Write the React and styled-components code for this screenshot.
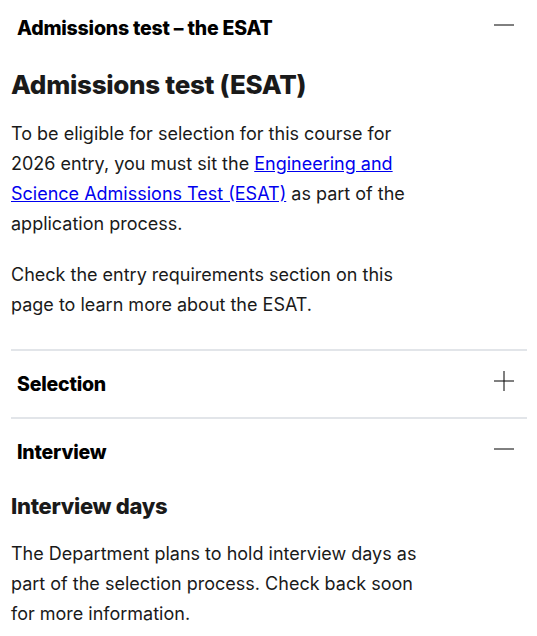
import React from 'react';
import styled, { createGlobalStyle } from 'styled-components';

const Global = createGlobalStyle`
  body {
    margin: 0;
    background: #fff;
    font-family: "Inter", "Liberation Sans", sans-serif;
    color: #1a1a1a;
  }
`;

const Page = styled.div`
  padding: 0 10px 0 11px;
`;

const Item = styled.section`
  border-top: ${p => (p.$first ? 'none' : '2px solid #e2e5e9')};
`;

const Header = styled.div`
  display: flex;
  align-items: center;
  justify-content: space-between;
  height: ${p => (p.$first ? '56px' : '66px')};
  padding-left: 6px;
`;

const Title = styled.h3`
  margin: 0;
  font-size: 19.5px;
  font-weight: 800;
  color: #000;
  letter-spacing: -0.2px;
`;

const Toggle = styled.span`
  width: 20px;
  height: 20px;
  margin: 0 13px 6px 0;
  display: flex;
`;

const Body = styled.div`
  padding: ${p => p.$top || 0}px 0 8px;
`;

const Heading = styled.h2`
  margin: 0 0 ${p => (p.$small ? 19 : 17)}px;
  font-size: ${p => (p.$small ? 22 : 26)}px;
  line-height: 1.3;
  font-weight: 800;
  color: #1a1a1a;
  letter-spacing: -0.3px;
`;

const Para = styled.p`
  margin: 0 0 21px;
  max-width: 410px;
  font-size: 18px;
  line-height: 30px;
`;

const Link = styled.a`
  color: #0000ee;
  text-decoration: underline;
`;

const Icon = ({ open }) => (
  <svg width="20" height="20" viewBox="0 0 20 20">
    <line x1="0" y1="10" x2="20" y2="10" stroke="#000" strokeWidth="1" />
    {!open && <line x1="10" y1="0" x2="10" y2="20" stroke="#000" strokeWidth="1" />}
  </svg>
);

const Accordion = ({ title, open, first, top, children }) => (
  <Item $first={first}>
    <Header $first={first}>
      <Title>{title}</Title>
      <Toggle><Icon open={open} /></Toggle>
    </Header>
    {open && <Body $top={top}>{children}</Body>}
  </Item>
);

export default function App() {
  return (
    <>
      <Global />
      <Page>
        <Accordion first open top={12} title="Admissions test – the ESAT">
          <Heading>Admissions test (ESAT)</Heading>
          <Para>
            To be eligible for selection for this course for 2026 entry, you must sit the{' '}
            <Link href="#">Engineering and Science Admissions Test (ESAT)</Link> as part of the
            application process.
          </Para>
          <Para>
            Check the entry requirements section on this page to learn more about the ESAT.
          </Para>
        </Accordion>
        <Accordion title="Selection" />
        <Accordion open top={7} title="Interview">
          <Heading $small>Interview days</Heading>
          <Para>
            The Department plans to hold interview days as part of the selection process. Check
            back soon for more information.
          </Para>
        </Accordion>
      </Page>
    </>
  );
}
